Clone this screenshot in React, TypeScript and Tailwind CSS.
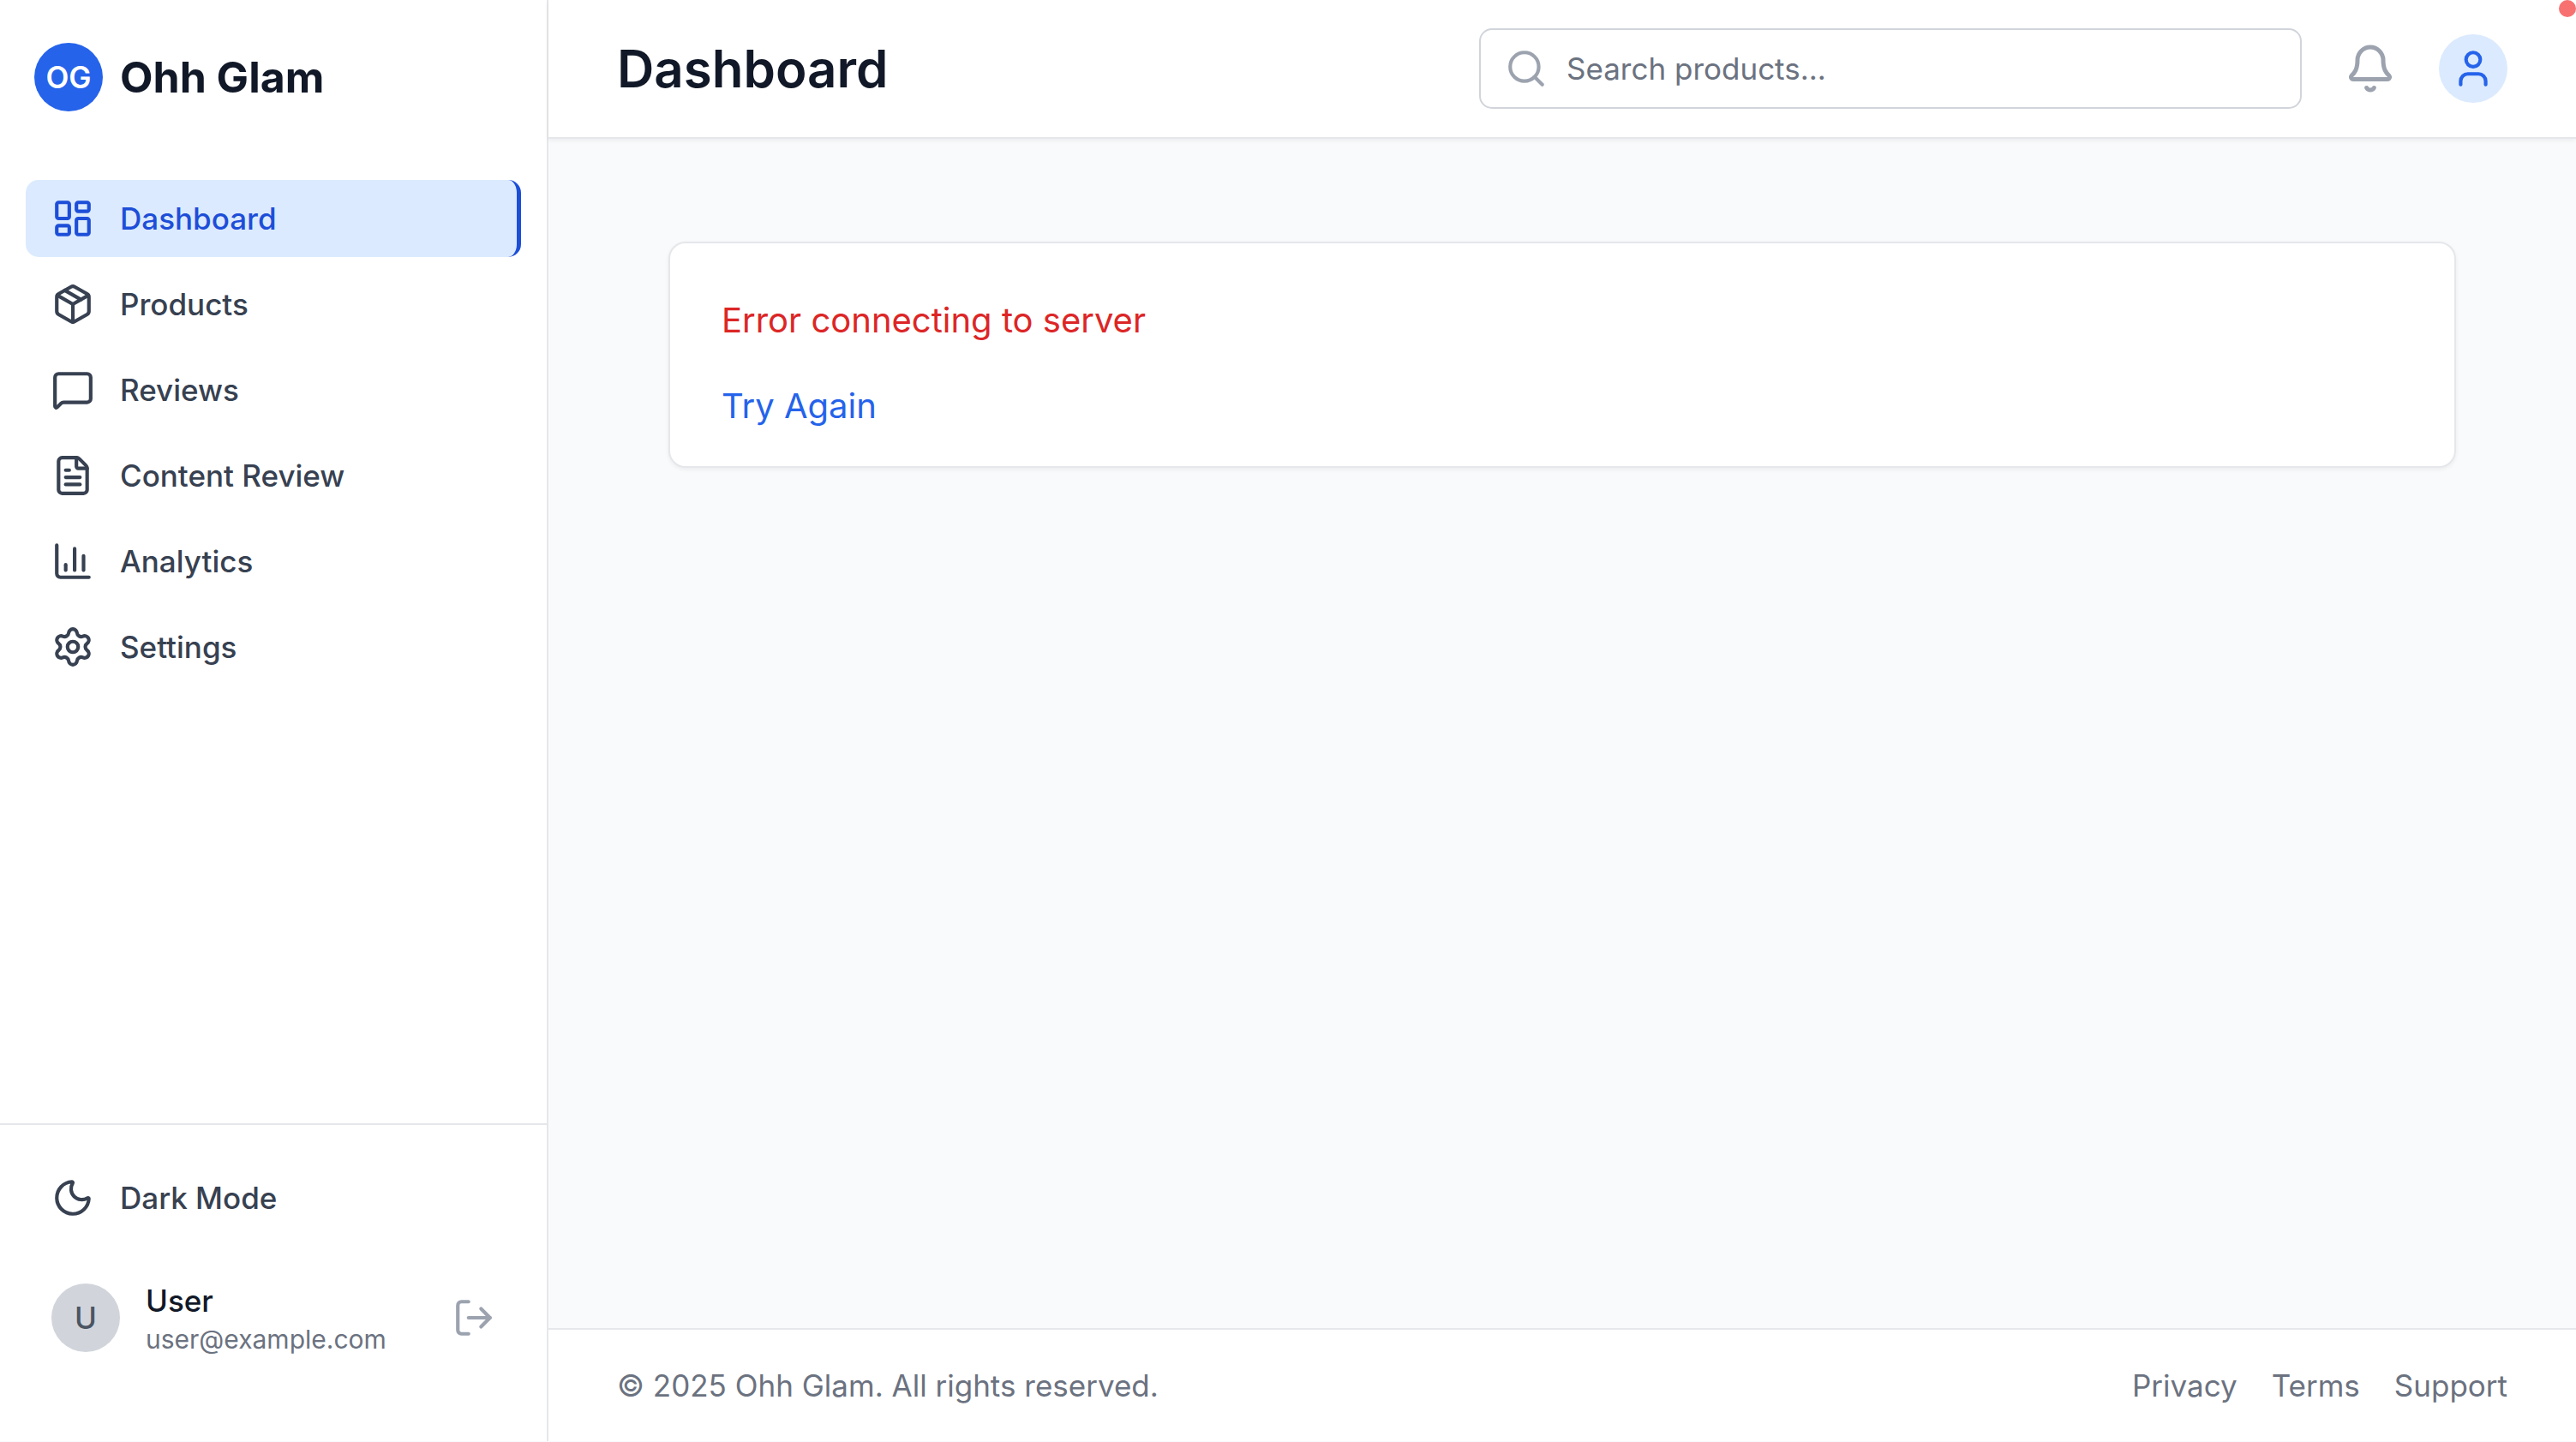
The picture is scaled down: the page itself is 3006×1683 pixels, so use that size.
import {
  Bell,
  FileText,
  LayoutDashboard,
  LogOut,
  MessageSquare,
  Moon,
  Package,
  Search,
  Settings,
  User,
} from "lucide-react";
import type { ComponentType } from "react";

type IconType = ComponentType<{ className?: string }>;

function AnalyticsIcon({ className }: { className?: string }) {
  return (
    <svg
      viewBox="0 0 24 24"
      fill="none"
      stroke="currentColor"
      strokeWidth="2"
      strokeLinecap="round"
      strokeLinejoin="round"
      className={className}
      aria-hidden="true"
    >
      <path d="M3 3v16a2 2 0 0 0 2 2h16" />
      <path d="M18 17V9" />
      <path d="M13 17V5" />
      <path d="M8 17v-3" />
    </svg>
  );
}

const navItems: { label: string; icon: IconType; active?: boolean }[] = [
  { label: "Dashboard", icon: LayoutDashboard, active: true },
  { label: "Products", icon: Package },
  { label: "Reviews", icon: MessageSquare },
  { label: "Content Review", icon: FileText },
  { label: "Analytics", icon: AnalyticsIcon },
  { label: "Settings", icon: Settings },
];

const footerLinks = ["Privacy", "Terms", "Support"];

function Sidebar() {
  return (
    <aside className="flex w-[640px] shrink-0 flex-col border-r-2 border-[#e5e7eb] bg-white">
      <div className="flex items-center gap-5 px-10 pt-[50px]">
        <div className="flex size-20 items-center justify-center rounded-full bg-[#2563eb] text-[35px] leading-[50px] font-semibold text-white">
          OG
        </div>
        <span className="text-[50px] leading-[70px] font-bold text-[#111827]">Ohh Glam</span>
      </div>
      <nav className="mt-20 flex flex-1 flex-col gap-2.5 px-[30px]">
        {navItems.map(({ label, icon: Icon, active }) => (
          <a
            key={label}
            href="#"
            aria-current={active ? "page" : undefined}
            className={
              active
                ? "flex items-center gap-[30px] rounded-[15px] border-r-[5px] border-[#1d4ed8] bg-[#dbeafe] px-[30px] py-5 text-[35px] leading-[50px] font-medium text-[#1d4ed8]"
                : "flex items-center gap-[30px] rounded-[15px] px-[30px] py-5 text-[35px] leading-[50px] font-medium text-[#374151]"
            }
          >
            <Icon className="size-[50px] shrink-0" />
            {label}
          </a>
        ))}
      </nav>
      <div className="border-t-2 border-[#e5e7eb] px-[30px] pt-10 pb-[79px]">
        <button
          type="button"
          className="flex w-full items-center gap-[30px] rounded-[15px] px-[30px] py-5 text-[35px] leading-[50px] font-medium text-[#374151]"
        >
          <Moon className="size-[50px] shrink-0" />
          Dark Mode
        </button>
        <div className="mt-[30px] flex items-center gap-[30px] px-[30px] py-5">
          <div className="flex size-20 shrink-0 items-center justify-center rounded-full bg-[#d1d5db] text-[35px] leading-[50px] font-medium text-[#4b5563]">
            U
          </div>
          <div className="min-w-0 flex-1">
            <p className="truncate text-[35px] leading-[50px] font-medium text-[#111827]">User</p>
            <p className="truncate text-[30px] leading-10 text-[#6b7280]">user@example.com</p>
          </div>
          <button type="button" aria-label="Log out" className="text-[#9ca3af]">
            <LogOut className="size-[50px]" />
          </button>
        </div>
      </div>
    </aside>
  );
}

function Header() {
  return (
    <header className="relative flex h-[162px] shrink-0 items-center justify-between border-b-2 border-[#e5e7eb] bg-white px-20 shadow-[0_2px_5px_rgba(0,0,0,0.06)]">
      <h1 className="text-[60px] leading-20 font-semibold text-[#111827]">Dashboard</h1>
      <div className="flex items-center gap-[50px]">
        <div className="relative">
          <Search className="pointer-events-none absolute top-[22px] left-[30px] size-[50px] text-[#9ca3af]" />
          <input
            type="text"
            aria-label="Search products"
            placeholder="Search products..."
            className="block w-[960px] appearance-none rounded-[15px] border-2 border-solid border-[#d1d5db] bg-white py-5 pr-[30px] pl-[100px] text-[35px] leading-[50px] text-[#111827] placeholder:text-[#6b7280]"
          />
        </div>
        <button type="button" aria-label="Notifications" className="text-[#9ca3af]">
          <Bell className="size-[60px]" />
        </button>
        <button
          type="button"
          aria-label="Account"
          className="flex size-20 items-center justify-center rounded-full bg-[#dbeafe] text-[#2563eb]"
        >
          <User className="size-[50px]" />
        </button>
      </div>
      <span className="absolute top-0 right-0 size-5 rounded-full bg-[#f87171]" />
    </header>
  );
}

function ErrorCard() {
  return (
    <section className="rounded-[20px] border-2 border-[#e5e7eb] bg-white px-[60px] pt-[60px] pb-10 shadow-[0_2px_5px_rgba(0,0,0,0.06)]">
      <p className="text-[40px] leading-[60px] text-[#dc2626]">Error connecting to server</p>
      <button type="button" className="mt-10 block text-[40px] leading-[60px] text-[#2563eb]">
        Try Again
      </button>
    </section>
  );
}

function Footer() {
  return (
    <footer className="flex items-center justify-between border-t-2 border-[#e5e7eb] bg-white px-20 py-10 text-[35px] leading-[50px] text-[#6b7280]">
      <p>© 2025 Ohh Glam. All rights reserved.</p>
      <div className="flex gap-10">
        {footerLinks.map((label) => (
          <a key={label} href="#">
            {label}
          </a>
        ))}
      </div>
    </footer>
  );
}

export default function App() {
  return (
    <div className="flex h-screen bg-[#f9fafb] pb-px font-[Inter,sans-serif]">
      <Sidebar />
      <div className="flex min-w-0 flex-1 flex-col">
        <Header />
        <main className="flex-1 px-[140px] py-[120px]">
          <ErrorCard />
        </main>
        <Footer />
      </div>
    </div>
  );
}
